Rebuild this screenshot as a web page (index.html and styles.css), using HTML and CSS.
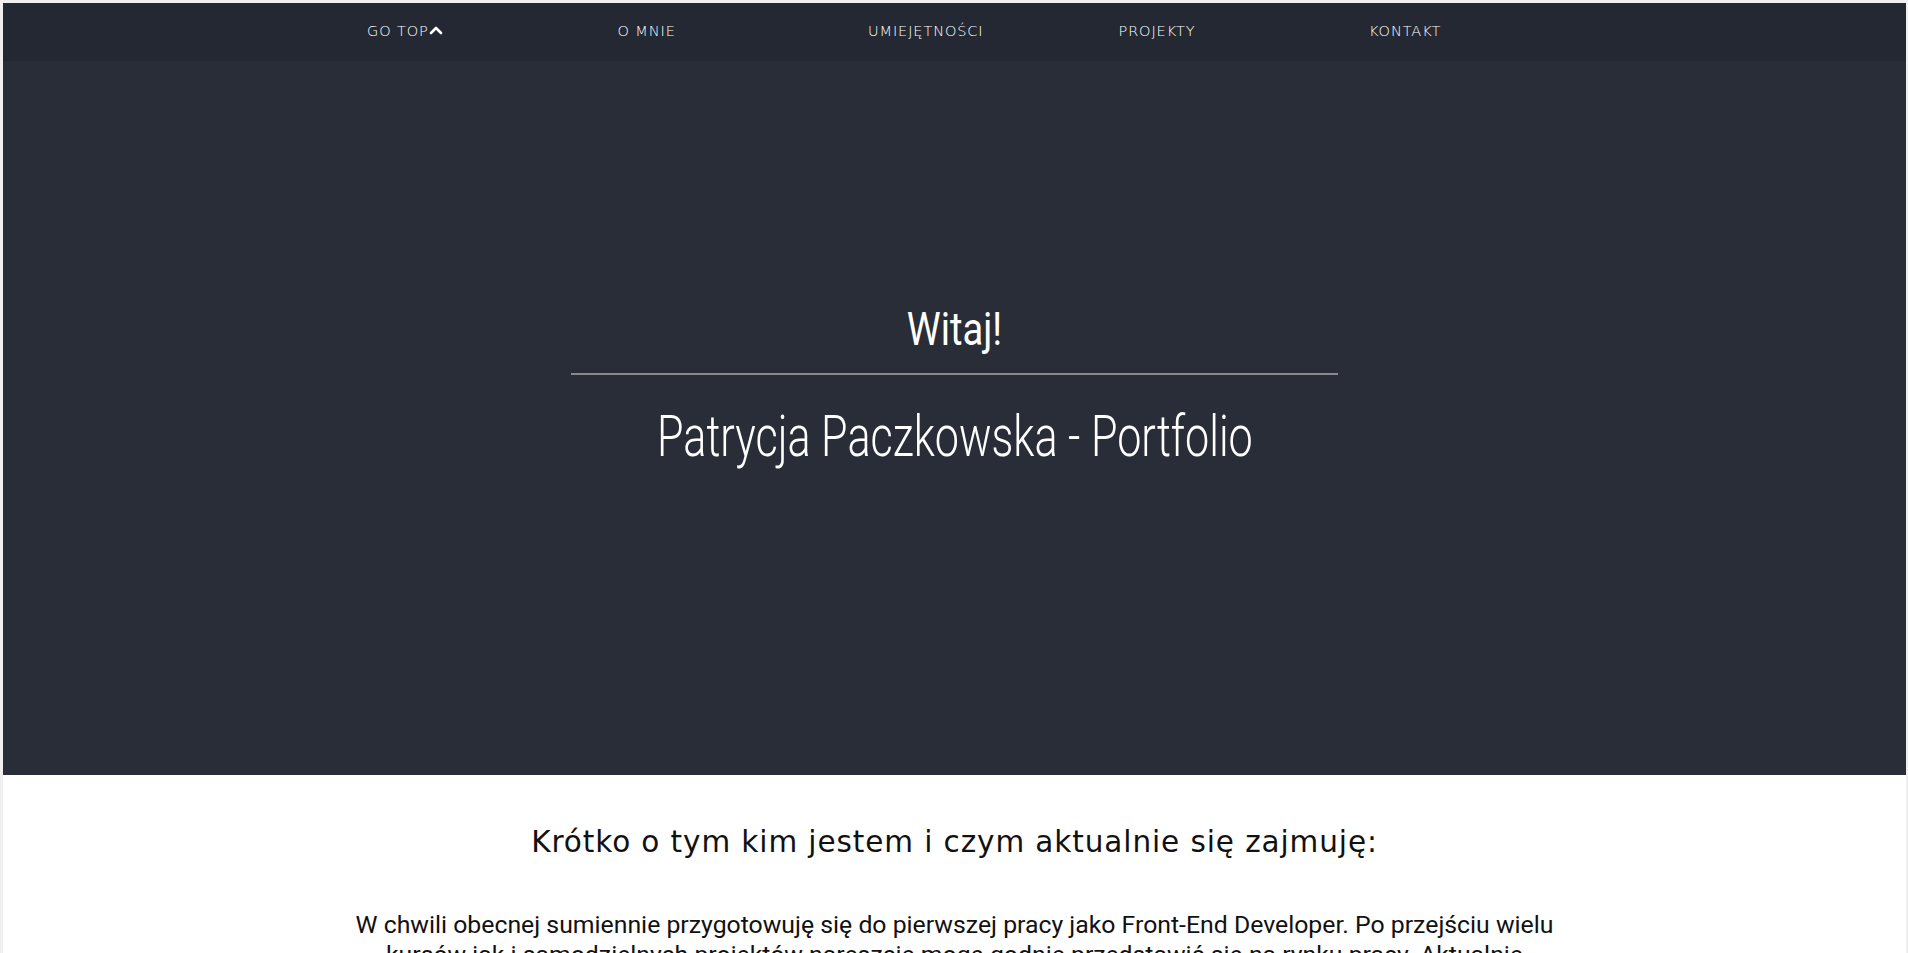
FILE: index.html
```html
<!DOCTYPE html>
<html lang="pl">
<head>
<meta charset="utf-8">
<title>Patrycja Paczkowska - Portfolio</title>
<link rel="stylesheet" href="styles.css">
</head>
<body>
<header class="hero">
  <nav class="nav">
    <ul class="nav-list">
      <li class="nav-item"><a href="#" class="nav-link">GO TOP<svg class="chev" viewBox="0 0 14 10" width="14" height="10"><path d="M2 8 L7 3 L12 8" fill="none" stroke="#fff" stroke-width="2.6" stroke-linecap="round" stroke-linejoin="round"/></svg></a></li>
      <li class="nav-item"><a href="#" class="nav-link">O MNIE</a></li>
      <li class="nav-item"><a href="#" class="nav-link">UMIEJĘTNOŚCI</a></li>
      <li class="nav-item"><a href="#" class="nav-link">PROJEKTY</a></li>
      <li class="nav-item"><a href="#" class="nav-link">KONTAKT</a></li>
    </ul>
  </nav>
  <div class="hero-body">
    <h1 class="hero-greet">Witaj!</h1>
    <hr class="hero-line">
    <h2 class="hero-title">Patrycja Paczkowska - Portfolio</h2>
  </div>
</header>
<main class="about">
  <h3 class="about-title">Krótko o tym kim jestem i czym aktualnie się zajmuję:</h3>
  <p class="about-text">W chwili obecnej sumiennie przygotowuję się do pierwszej pracy jako Front-End Developer. Po przejściu wielu kursów jak i samodzielnych projektów nareszcie mogę godnie przedstawić się na rynku pracy. Aktualnie rozwijam swoje umiejętności w JavaScript oraz React, tworząc kolejne projekty i ucząc się każdego dnia czegoś nowego.</p>
</main>
</body>
</html>
```
FILE: styles.css
```css
html { background: #f0f0f0; }
body {
  margin: 0;
  padding: 3px 2px 0 3px;
  background: #f0f0f0;
  font-family: "DejaVu Sans", sans-serif;
}
.hero {
  background: #292d37;
  height: 772px;
  display: flex;
  flex-direction: column;
}
.nav {
  background: #242832;
  height: 58px;
  box-sizing: border-box;
  padding-bottom: 3px;
  display: flex;
  align-items: center;
}
.nav-list {
  list-style: none;
  margin: 0;
  padding: 0 0 0 364px;
  display: flex;
}
.nav-item { width: 250.5px; }
.nav-link {
  color: #ffffff;
  text-decoration: none;
  font-family: "DejaVu Sans", sans-serif;
  font-weight: 200;
  font-size: 14.5px;
  letter-spacing: 0.9px;
  display: inline-flex;
  align-items: center;
}
.chev { margin-left: 0; margin-top: -2px; }
.hero-body {
  display: flex;
  flex-direction: column;
  align-items: center;
  padding-top: 238px;
}
.hero-greet {
  margin: 0;
  color: #fff;
  font-family: "Roboto", sans-serif;
  font-weight: 400;
  font-size: 46px;
  line-height: 60px;
  transform: scaleX(0.83);
}
.hero-line {
  width: 767px;
  margin: 14px 0 0;
  border: 0;
  height: 2px;
  background: #8a8a8e;
}
.hero-title {
  margin: 21px 0 0;
  color: #fff;
  font-family: "Roboto", sans-serif;
  font-weight: 300;
  font-size: 58px;
  line-height: 80px;
  white-space: nowrap;
  transform: scaleX(0.743);
}
.about {
  background: #fff;
  min-height: 400px;
  display: flex;
  flex-direction: column;
  align-items: center;
  padding-top: 49px;
}
.about-title {
  margin: 0;
  font-family: "DejaVu Sans", sans-serif;
  font-weight: 400;
  font-size: 29.5px;
  letter-spacing: 0.9px;
  line-height: 36px;
  color: #111;
}
.about-text {
  margin: 50px 0 0;
  width: 1235px;
  text-align: center;
  font-family: "Roboto", sans-serif;
  font-size: 24.8px;
  line-height: 30px;
  color: #111;
}
```
